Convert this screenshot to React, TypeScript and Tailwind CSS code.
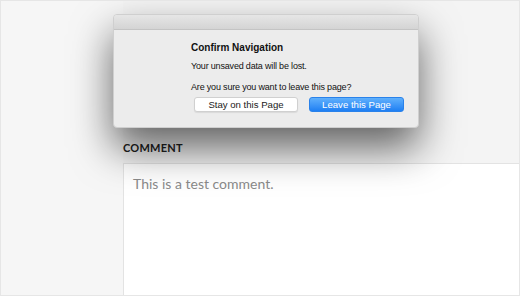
import React from "react";

const sysFont = { fontFamily: '"Liberation Sans", Arial, sans-serif' };

function ConfirmDialog() {
  return (
    <div
      className="absolute left-[112px] top-[13px] w-[306px] h-[114px] rounded-[4px] bg-[#ececec] border border-[#cfcfcf] shadow-[0_20px_40px_rgba(0,0,0,0.6)] overflow-hidden"
      style={sysFont}
    >
      <div className="h-[15px] bg-gradient-to-b from-[#e6e6e6] to-[#d4d4d4] border-b border-[#c4c4c4]" />
      <div className="pl-[77px] pr-[14px] text-[#111]">
        <div className="mt-[12px] text-[10px] font-bold leading-[12px]">Confirm Navigation</div>
        <div className="mt-[6px] text-[9px] tracking-[-0.02em] leading-[12px]">Your unsaved data will be lost.</div>
        <div className="mt-[9px] text-[9px] tracking-[-0.02em] leading-[12px]">Are you sure you want to leave this page?</div>
        <div className="mt-[4px] flex gap-[11px] pl-[3px]">
          <button className="w-[104px] h-[15px] rounded-[3px] bg-white border border-[#d0d0d0] shadow-[0_1px_1px_rgba(0,0,0,0.08)] text-[9.6px] leading-[13px] text-[#1a1a1a]">
            Stay on this Page
          </button>
          <button className="w-[95px] h-[15px] rounded-[3px] bg-gradient-to-b from-[#5fb0fc] to-[#1d7ff3] border border-[#2a82ea] text-[9.6px] leading-[13px] text-white">
            Leave this Page
          </button>
        </div>
      </div>
    </div>
  );
}

export default function App() {
  return (
    <div className="relative w-[520px] h-[296px] overflow-hidden bg-[#f4f4f4] border border-[#e6e6e6]">
      <div className="flex h-full">
        <div className="w-[122px] shrink-0 bg-[#f6f6f6]" />
        <div className="flex-1 flex flex-col pt-[140px]">
          <div
            className="text-[11px] font-bold tracking-[0.02em] text-[#222] leading-[14px]"
            style={{ fontFamily: "Lato, sans-serif" }}
          >
            COMMENT
          </div>
          <div className="mt-[8px] flex-1 bg-white border-t border-l border-[#e3e3e3] pl-[9px] pt-[10px]">
            <div
              className="text-[14px] leading-[20px] text-[#8a8a8a]"
              style={{ fontFamily: "Lato, sans-serif" }}
            >
              This is a test comment.
            </div>
          </div>
        </div>
      </div>
      <ConfirmDialog />
    </div>
  );
}
